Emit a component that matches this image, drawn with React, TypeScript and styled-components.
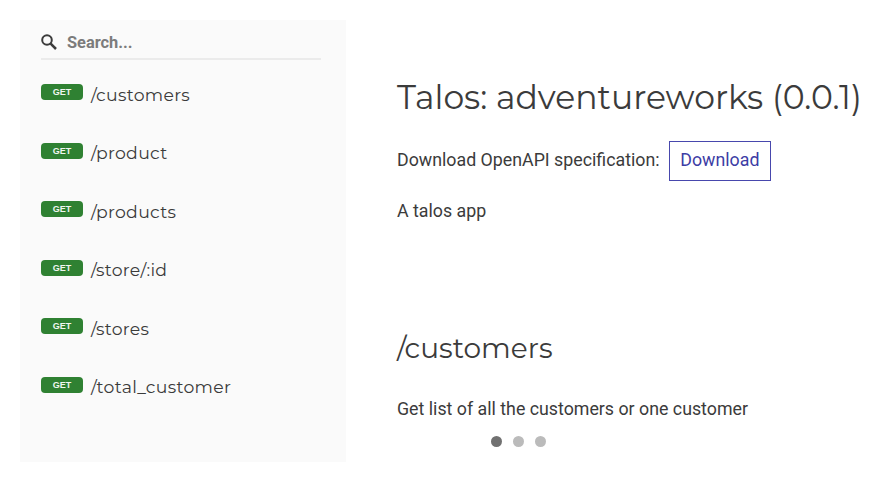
import React from "react";
import styled, { createGlobalStyle } from "styled-components";

const GlobalStyle = createGlobalStyle`
  * { box-sizing: border-box; }
  html, body { margin: 0; background: #fff; }
  body { color: #3b3b3b; font-family: Roboto, sans-serif; font-size: 17.79px; overflow: hidden; }
`;

const headingFont = `Montserrat, Inter, sans-serif`;

const Page = styled.div`
  display: flex;
  width: 894px;
  height: 480px;
  padding: 20px 0 0 20px;
`;

const Sidebar = styled.nav`
  flex: none;
  width: 326px;
  height: 442px;
  padding: 0 25px 0 21px;
  background: #fafafa;
`;

const SearchRow = styled.label`
  display: flex;
  align-items: center;
  height: 40px;
  padding-top: 7px;
  border-bottom: 2px solid #ebebeb;
`;

const SearchIcon = styled.svg`
  width: 16px;
  height: 16px;
  margin: -2px 10px 0 0;
  flex: none;
`;

const SearchInput = styled.input`
  flex: 1;
  min-width: 0;
  padding: 0;
  border: 0;
  outline: 0;
  background: transparent;
  font: 700 16.4px Roboto, sans-serif;
  color: #333;
  &::placeholder { color: #7c7c7c; opacity: 1; }
`;

const Menu = styled.ul`
  margin: 0;
  padding: 6px 0 0;
  list-style: none;
`;

const MenuItem = styled.li`
  display: flex;
  align-items: center;
  height: 58.5px;
`;

const Verb = styled.span`
  width: 42px;
  height: 16px;
  margin: -6px 8px 0 0;
  border-radius: 4px;
  background: #2f8132;
  color: #f0f6f0;
  font: 700 9px/16px "Liberation Sans", Arial, sans-serif;
  text-align: center;
`;

const Path = styled.span`
  margin-top: -0.6px;
  font: 400 17.3px/24px ${headingFont};
  letter-spacing: 0.31px;
`;

const Content = styled.main`
  flex: 1;
  padding-left: 51px;
  white-space: nowrap;
`;

const Title = styled.h1`
  margin: 54px 0 0;
  font: 400 33.05px/46px ${headingFont};
`;

const SpecLine = styled.p`
  display: flex;
  align-items: flex-start;
  height: 40px;
  margin: 21px 0 0;
  line-height: 37px;
`;

const DownloadButton = styled.a`
  width: 102px;
  height: 40px;
  margin-left: 9.3px;
  border: 1px solid #4848ad;
  color: #3d3da5;
  line-height: 35px;
  text-align: center;
`;

const Text = styled.p<{ $top: number }>`
  margin: ${(p) => p.$top}px 0 0;
  line-height: 24px;
`;

const SectionTitle = styled.h2`
  margin: 105px 0 0;
  font: 400 28px/40px ${headingFont};
`;

const Dots = styled.div`
  display: flex;
  gap: 11px;
  margin: 15px 0 0 94px;
`;

const Dot = styled.span<{ $active?: boolean }>`
  width: 11px;
  height: 11px;
  border-radius: 50%;
  background: ${(p) => (p.$active ? "#717171" : "#bbb")};
`;

const endpoints = [
  "/customers",
  "/product",
  "/products",
  "/store/:id",
  "/stores",
  "/total_customer",
];

export default function App() {
  return (
    <Page>
      <GlobalStyle />
      <Sidebar>
        <SearchRow>
          <SearchIcon viewBox="0 0 16 16" fill="none" stroke="#3b3b3b">
            <circle cx="6" cy="6" r="4.8" strokeWidth="2" />
            <path d="M9.4 9.4 L15 15" strokeWidth="2.5" />
          </SearchIcon>
          <SearchInput placeholder="Search..." />
        </SearchRow>
        <Menu>
          {endpoints.map((path) => (
            <MenuItem key={path}>
              <Verb>GET</Verb>
              <Path>{path}</Path>
            </MenuItem>
          ))}
        </Menu>
      </Sidebar>
      <Content>
        <Title>Talos: adventureworks (0.0.1)</Title>
        <SpecLine>
          Download OpenAPI specification:
          <DownloadButton>Download</DownloadButton>
        </SpecLine>
        <Text $top={18}>A talos app</Text>
        <SectionTitle>/customers</SectionTitle>
        <Text $top={29}>Get list of all the customers or one customer</Text>
        <Dots>
          <Dot $active />
          <Dot />
          <Dot />
        </Dots>
      </Content>
    </Page>
  );
}
